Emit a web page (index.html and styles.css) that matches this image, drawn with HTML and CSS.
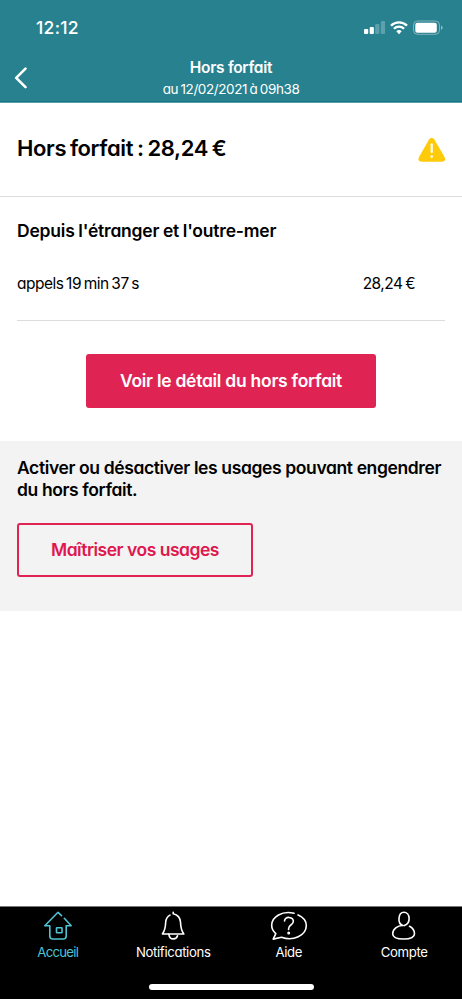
FILE: index.html
```html
<!DOCTYPE html>
<html lang="fr">
<head>
<meta charset="utf-8">
<meta name="viewport" content="width=device-width, initial-scale=1">
<title>Hors forfait</title>
<link rel="stylesheet" href="styles.css">
</head>
<body>
<div class="app">
  <header class="header">
    <div class="status">
      <span class="time">12:12</span>
      <svg class="status-icons" width="80" height="16" viewBox="0 0 80 16" fill="#fff">
        <rect x="1" y="9" width="4.2" height="5" rx="1"/>
        <rect x="6.7" y="7" width="4.2" height="7" rx="1"/>
        <rect x="12.2" y="4" width="4.2" height="10" rx="1" opacity=".25"/>
        <rect x="17.8" y="1" width="4.2" height="13" rx="1" opacity=".25"/>
        <g fill="none" stroke="#fff" stroke-width="2.3">
          <path d="M28 5.6a11.4 11.4 0 0 1 16 0"/>
          <path d="M30.9 8.7a7.3 7.3 0 0 1 10.200 0"/>
        </g>
        <path d="M33.300 11.200a4 4 0 0 1 5.400 0L36 14.200z"/>
        <rect x="50.500" y="1" width="26" height="13.300" rx="4" fill="none" stroke="#fff" opacity=".4"/>
        <rect x="52.300" y="2.700" width="21.500" height="10" rx="2"/>
        <path d="M78 5.500q1.800.7 1.800 2.200T78 9.900z" opacity=".45"/>
      </svg>
    </div>
    <div class="nav">
      <svg class="back" width="14" height="22" viewBox="0 0 14 22" fill="none" stroke="#fff" stroke-width="2.600" stroke-linecap="round" stroke-linejoin="round"><path d="M11.500 1.600 2.200 10.900l9.300 9.300"/></svg>
      <div class="nav-text">
        <h1 class="nav-title">Hors forfait</h1>
        <p class="nav-date">au 12/02/2021 à 09h38</p>
      </div>
    </div>
  </header>
  <main class="content">
    <section class="summary">
      <h2 class="total">Hors forfait : 28,24 €</h2>
      <svg class="warning" width="28" height="26" viewBox="0 0 28 26"><path d="M11.200 2.300Q13.700-.9 16.200 2.300L26.500 20Q28.300 24.500 24 24.800H3.800Q-.8 24.500 1 20z" fill="#ffcb08"/><path d="M13.700 7.300v7.800" stroke="#fff" stroke-width="2.200" stroke-linecap="round"/><circle cx="13.700" cy="19.600" r="1.300" fill="#fff"/></svg>
    </section>
    <section class="details">
      <h3 class="details-title">Depuis l'étranger et l'outre-mer</h3>
      <div class="row"><span class="usage">appels 19 min 37 s</span><span class="price">28,24 €</span></div>
      <button class="button primary"><span>Voir le détail du hors forfait</span></button>
    </section>
    <section class="control">
      <p class="control-text">Activer ou désactiver les usages pouvant engendrer<br>du hors forfait.</p>
      <button class="button secondary"><span>Maîtriser vos usages</span></button>
    </section>
  </main>
  <footer class="footer">
    <nav class="tabs">
      <a class="tab active">
        <svg width="36" height="30" viewBox="0 0 36 30"><path d="M21.500 4.600 18 1.300 4.800 14.800h5V25q0 3 3 3h10.400q3 0 3-3V14.800h5L24.300 7.300"/><rect x="16.500" y="16.800" width="5.500" height="5" rx=".5"/></svg>
        <span>Accueil</span>
      </a>
      <a class="tab">
        <svg width="36" height="30" viewBox="0 0 36 30"><path d="M18.200 1.200v1.500q6.800 1.600 7.300 8.300c.2 6 .8 8.700 3.300 12H7.400c2.500-3.300 3.100-6 3.300-12 .3-3.200 1.700-5.500 4.300-6.900"/><path d="M13.800 23.300q.7 4.500 4.500 4.600 3.400 0 4.200-3.200"/></svg>
        <span>Notifications</span>
      </a>
      <a class="tab">
        <svg width="38" height="30" viewBox="0 0 38 30"><path d="M24 2.300C12.500-.5 1.600 5.500 1.700 14.500c0 3.500 1.700 5.900 4.100 8.100L3.200 28.100l8.300-1.900C23 30.500 36.300 24.500 36.300 14.500c0-4.200-3.300-8.500-8.200-10.600"/><path d="M14.500 10c.3-5.500 9.200-4.200 8.800.8-.3 3.300-4.700 2.700-4.700 7v.6"/><circle cx="18.700" cy="22" r=".7" fill="currentColor"/></svg>
        <span>Aide</span>
      </a>
      <a class="tab">
        <svg width="36" height="30" viewBox="0 0 36 30"><path d="M17 14.500c-5.600-.3-10.300 4-10.300 8.200 0 3.500 4.200 5.300 10.900 5.300s10.900-1.800 10.900-5.300c0-2.800-1.600-5.600-5-7.400M17 14.500c-6.100-1.800-4.900-13.200.9-13.200 6.300 0 7.400 10.800.5 13.300"/></svg>
        <span>Compte</span>
      </a>
    </nav>
    <div class="home-bar"></div>
  </footer>
</div>
</body>
</html>
```

FILE: styles.css
```css
* { box-sizing: border-box; }
body { margin: 0; background: #fff; color: #000; font-family: Inter, "Open Sans", sans-serif; font-feature-settings: "cv11"; }
h1, h2, h3, p { margin: 0; }
.app { height: 999px; display: flex; flex-direction: column; }
.header { height: 103px; flex: none; color: #fff; background: #28818f; border-bottom: 1px solid #55a0ac; box-shadow: inset 0 -1px #167381; }
.status { height: 57px; padding: 17px 19px 0 36px; display: flex; justify-content: space-between; }
.time { font-size: 17.5px; line-height: 22px; font-weight: 500; letter-spacing: .3px; }
.status-icons { margin-top: 3px; }
.nav { display: grid; grid-template-columns: 30px 1fr 30px; padding: 0 14px; }
.back { margin-top: 10px; }
.nav-text { text-align: center; white-space: nowrap; }
.nav-title { font-size: 15.5px; line-height: 20px; font-weight: 600; letter-spacing: -.3px; padding-top: 1px; }
.nav-date { font-size: 13.5px; line-height: 18px; margin-top: 2px; letter-spacing: -.4px; word-spacing: -1px; }
.content { flex: 1; white-space: nowrap; }
.summary { height: 94px; padding: 0 16px 0 17px; display: flex; align-items: center; justify-content: space-between; border-bottom: 1px solid #dcdcdc; }
.total { font-size: 22px; line-height: 28px; font-weight: 600; letter-spacing: -.38px; word-spacing: -1.3px; padding-bottom: 3px; }
.details { padding: 22px 17px 33px; display: flex; flex-direction: column; }
.details-title { font-size: 17.5px; line-height: 24px; font-weight: 600; letter-spacing: -.2px; word-spacing: -.5px; }
.row { display: flex; justify-content: space-between; padding: 31px 30px 26px 0; border-bottom: 1px solid #dcdcdc; font-size: 15.5px; line-height: 20px; letter-spacing: -.5px; word-spacing: -1.2px; }
.button { font: inherit; font-size: 17.5px; font-weight: 600; line-height: 24px; height: 54px; padding: 0; border-radius: 3px; }
.primary { width: 290px; margin-top: 33px; align-self: center; border: 0; color: #fff; background: #df2454; letter-spacing: -.27px; }
.control { height: 170px; padding: 16px 17px; background: #f3f3f3; }
.control-text { font-size: 17.5px; line-height: 21.5px; font-weight: 600; letter-spacing: -.38px; }
.secondary { width: 236px; margin-top: 23px; border: 2px solid #df2454; color: #df174e; background: transparent; letter-spacing: -.48px; }
.footer { height: 93px; flex: none; background: #000; border-top: 1px solid #777; color: #fff; }
.tabs { display: grid; grid-template-columns: repeat(4, 1fr); height: 77px; }
.tab { display: flex; flex-direction: column; align-items: center; padding-top: 4px; font-size: 13.2px; line-height: 18px; letter-spacing: -.35px; white-space: nowrap; }
.tab svg { fill: none; stroke: currentColor; stroke-width: 1.6; stroke-linecap: round; stroke-linejoin: round; }
.tab:first-child { letter-spacing: -.75px; }
.tab span { margin-top: 2px; }
.active { color: #4dc3d3; }
.home-bar { width: 165px; height: 6px; border-radius: 3px; margin: 0 auto; background: #fff; }
```
